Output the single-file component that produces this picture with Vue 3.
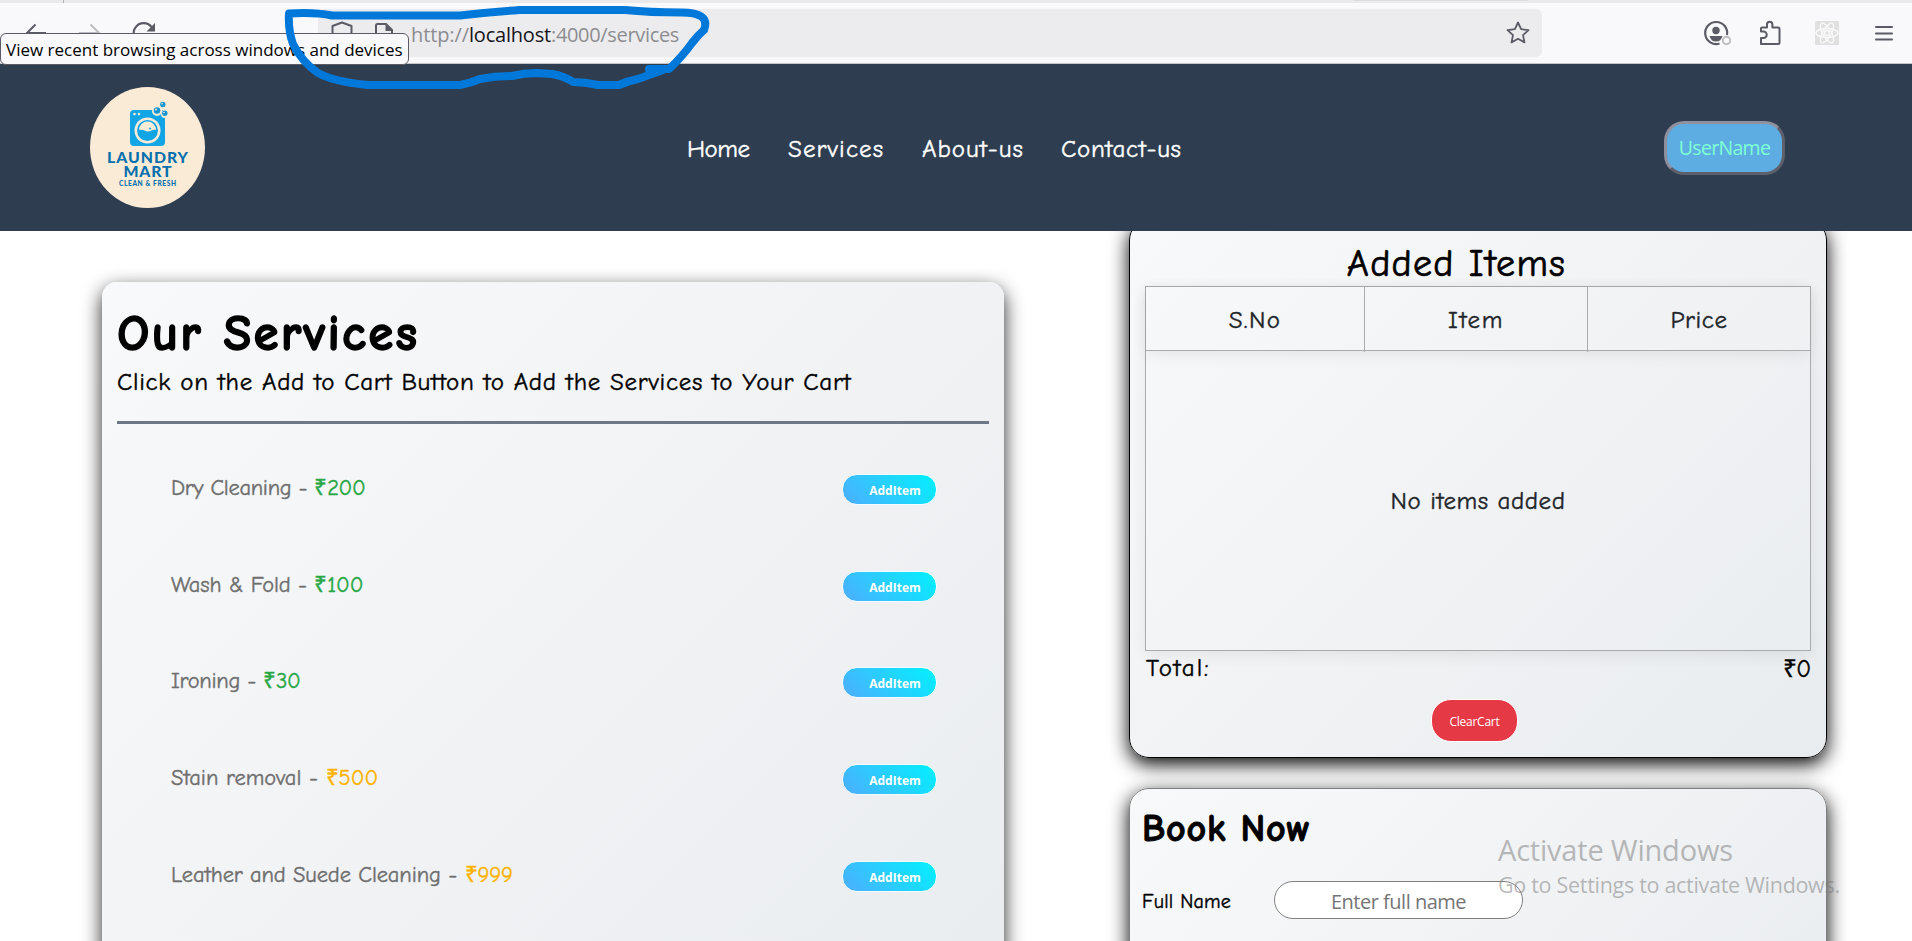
<script setup>
const links = [
  { label: 'Home', cls: 'home' },
  { label: 'Services', cls: 'services' },
  { label: 'About-us', cls: 'about' },
  { label: 'Contact-us', cls: 'contact' }
]
const services = [
  { name: 'Dry Cleaning', price: 200, tone: 'green', cls: 'dry' },
  { name: 'Wash & Fold', price: 100, tone: 'green', cls: 'wash' },
  { name: 'Ironing', price: 30, tone: 'green', cls: 'iron' },
  { name: 'Stain removal', price: 500, tone: 'amber', cls: 'stain' },
  { name: 'Leather and Suede Cleaning', price: 999, tone: 'amber', cls: 'leather' }
]
</script>

<template>
  <div class="screen">
    <div class="chrome">
      <div class="tabstrip"><span class="tabedge"></span><span class="tabshade"></span></div>
      <div class="toolbar">
        <div class="history">
          <svg width="170" height="54" viewBox="0 0 170 54">
            <path d="M46 24H27M35.500 15.500 27 24l8.500 8.500" fill="none" stroke="#5b5b66" stroke-width="2" />
            <path d="M79 24h20M90.500 15.500 99 24l-8.500 8.500" fill="none" stroke="#bcbcc2" stroke-width="2" />
            <path d="M151.500 18a10 10 0 1 0 2 8" fill="none" stroke="#5b5b66" stroke-width="2.200" />
            <path d="M155 14v8.500h-8.500z" fill="#5b5b66" />
          </svg>
        </div>
        <div class="urlbar">
          <svg class="site" width="93" height="48" viewBox="0 0 93 48">
            <path d="M24 13.500 33.500 17v6c0 6-4 10-9.500 12-5.500-2-9.500-6-9.500-12v-6z" fill="none" stroke="#5b5b66" stroke-width="2" stroke-linejoin="round" />
            <path d="M58 33V16.500q0-1.500 1.500-1.500H68l6 6v12z" fill="none" stroke="#5b5b66" stroke-width="2" />
            <path d="M67.500 14v8H75z" fill="#5b5b66" />
          </svg>
          <span class="url"><span class="proto">http://</span><b>localhost</b><span class="path">:4000/services</span></span>
          <svg class="star" width="24" height="24" viewBox="0 0 24 24">
            <path d="M12 1.500l3.100 6.700 7.400.9-5.500 5 1.500 7.300L12 17.800l-6.500 3.600L7 14.100l-5.500-5 7.400-.9z" fill="none" stroke="#5b5b66" stroke-width="1.800" stroke-linejoin="round" />
          </svg>
        </div>
        <div class="tools">
          <svg width="28" height="28" viewBox="0 0 28 28">
            <path d="M16.500 24.500A11 11 0 1 1 24 16" fill="none" stroke="#5b5b66" stroke-width="2.200" />
            <circle cx="13" cy="11.500" r="3.700" fill="#5b5b66" />
            <path d="M6.500 17h13q-1.500 5.500-6.500 5.500T6.500 17z" fill="#5b5b66" />
            <circle cx="23.500" cy="21.500" r="3.700" fill="#f9f9fb" stroke="#bdbdc3" stroke-width="2" />
          </svg>
          <svg width="24" height="28" viewBox="0 0 24 28">
            <path d="M3 25V19h2.500a3 3 0 0 0 0-6.500H3V9.500q0-1 1-1h5V5.500a2.700 2.700 0 0 1 5.400 0v3H20q1.500 0 1.500 1.500v13.500q0 1.500-1.500 1.500z" fill="none" stroke="#5b5b66" stroke-width="2" stroke-linejoin="round" />
          </svg>
          <svg width="24" height="24" viewBox="0 0 24 24">
            <rect width="24" height="24" rx="1.500" fill="#e0e0e0" />
            <g fill="none" stroke="#fafafa" stroke-width="1.300">
              <ellipse cx="12" cy="12" rx="11" ry="4.300" />
              <ellipse cx="12" cy="12" rx="11" ry="4.300" transform="rotate(60 12 12)" />
              <ellipse cx="12" cy="12" rx="11" ry="4.300" transform="rotate(120 12 12)" />
              <circle cx="12" cy="12" r="2.500" fill="#e0e0e0" />
            </g>
          </svg>
          <svg width="18" height="16" viewBox="0 0 18 16">
            <path d="M1 2h16M1 8.500h16M1 14.500h16" stroke="#5b5b66" stroke-width="2" stroke-linecap="round" />
          </svg>
        </div>
      </div>
    </div>

    <header class="navbar">
      <svg class="logo" width="116" height="122" viewBox="0 0 116 122">
        <ellipse cx="57.500" cy="60.500" rx="57.500" ry="60.500" fill="#faebd7" />
        <rect x="40" y="23" width="35" height="36" rx="4" fill="#12a5e6" />
        <circle cx="67" cy="24" r="5" fill="#faebd7" />
        <circle cx="75" cy="27" r="4" fill="#faebd7" />
        <g fill="#faebd7">
          <circle cx="44.500" cy="27" r="1.300" /><circle cx="49" cy="27" r="1.300" />
          <circle cx="57.500" cy="43.500" r="13" />
        </g>
        <circle cx="57.500" cy="43.500" r="10.500" fill="#12a5e6" />
        <path d="M49 43a8.500 8.500 0 0 1 17 0c-3-1-5 1.500-8 1.500S53 42 49 43z" fill="#faebd7" />
        <circle cx="60" cy="41.500" r="1" fill="#12a5e6" />
        <g fill="#1695d0">
          <circle cx="67" cy="23.500" r="3.300" /><circle cx="72.800" cy="17.500" r="2.700" /><circle cx="74.800" cy="26.300" r="2.700" />
        </g>
        <g fill="#faebd7">
          <circle cx="66" cy="22.500" r="1" /><circle cx="72" cy="16.700" r=".8" /><circle cx="74" cy="25.500" r=".8" />
        </g>
        <g class="brand">
          <text x="17" y="75.500" font-size="15.800" textLength="81">LAUNDRY</text>
          <text x="33.500" y="90" font-size="15.800" textLength="48">MART</text>
          <text x="29" y="98.800" font-size="6.600" textLength="57">CLEAN &amp; FRESH</text>
        </g>
      </svg>
      <nav>
        <a v-for="l in links" :key="l.label" :class="l.cls">{{ l.label }}</a>
      </nav>
      <button class="user">UserName</button>
    </header>

    <main>
      <section class="card catalog">
        <h1>Our Services</h1>
        <p class="hint">Click on the Add to Cart Button to Add the Services to Your Cart</p>
        <hr>
        <div v-for="s in services" :key="s.name" class="service">
          <span class="name" :class="s.cls">{{ s.name }} - <span :class="s.tone">₹{{ s.price }}</span></span>
          <button class="add">AddItem</button>
        </div>
      </section>

      <div class="side">
        <section class="card cart">
          <h2>Added Items</h2>
          <div class="table">
            <div class="head"><span class="sno">S.No</span><span class="item">Item</span><span class="price">Price</span></div>
            <div class="empty">No items added</div>
          </div>
          <div class="total"><span>Total:</span><span class="sum">₹0</span></div>
          <button class="clear">ClearCart</button>
        </section>
        <section class="card book">
          <h2>Book Now</h2>
          <div class="field">
            <label>Full Name</label>
            <input type="text" placeholder="Enter full name">
          </div>
        </section>
      </div>
    </main>

    <div class="tooltip">View recent browsing across windows and devices</div>
    <svg class="scribble" width="720" height="95" viewBox="0 0 720 95">
      <path d="M332 15.500Q315 12 289 13.500Q288 30 293 44Q302 62 318 73Q335 82 368 85L460 85Q471 83 480 79Q495 76 512 76Q524 73 536 73L552 74Q564 76 573 82Q585 82 598 85L619 85Q628 81 638 79Q652 74 663 70L649 69L669 69Q682 57 692 43Q698 35 704 30Q711 12 680 12.500Q650 12.500 625 10L520 10Q490 12 460 15.500Z" fill="none" stroke="#0078d9" stroke-width="8" stroke-linejoin="round" stroke-linecap="round" />
    </svg>
    <div class="watermark">
      <div class="line1">Activate Windows</div>
      <div class="line2">Go to Settings to activate Windows.</div>
    </div>
  </div>
</template>

<style>
html, body { margin: 0; overflow: hidden; background: #fff; }
</style>

<style scoped>
* { box-sizing: border-box; }
h1, h2, p { margin: 0; font-weight: 400; }
button { font-family: "Open Sans", "Noto Sans", sans-serif; }
.screen {
  position: relative; width: 1912px; height: 941px; overflow: hidden;
  display: flex; flex-direction: column; background: #fff; color: #000;
  font-family: "Comic Sans MS", "Comic Neue", "Open Sans", sans-serif;
}
.chrome { height: 64px; flex: none; background: #f9f9fb; border-bottom: 1px solid #c4c4c8; }
.tabstrip { height: 3px; background: #eaeaed; display: flex; justify-content: space-between; }
.tabedge { width: 64px; border-right: 1px solid #b0b0b5; }
.tabshade { width: 175px; margin-right: 384px; height: 1px; background: #dcdce0; }
.toolbar { height: 60px; display: flex; align-items: flex-start; }
.history { width: 318px; padding-top: 6px; }
.urlbar { width: 1224px; height: 48px; margin-top: 6px; border-radius: 6px; background: #ececee; display: flex; align-items: center; }
.site { flex: none; }
.url { flex: 1; font: 20px/48px "Open Sans", sans-serif; color: #8c8c90; letter-spacing: -.1px; margin-top: 3px; }
.url b { font-weight: 400; color: #15141a; letter-spacing: -.2px; }
.path { letter-spacing: -.33px; }
.star { margin-right: 12px; }
.tools { flex: 1; height: 60px; display: flex; align-items: center; padding-left: 161px; }
.tools svg { flex: none; }
.tools svg:nth-child(2) { margin-left: 27px; }
.tools svg:nth-child(3) { margin-left: 33px; }
.tools svg:nth-child(4) { margin-left: 36px; }

.navbar { height: 167px; flex: none; background: #2e3e50; display: flex; align-items: center; padding: 0 127px 0 90px; position: relative; z-index: 2; }
.logo { margin-top: 1px; }
.brand { font-family: Lato, "Open Sans", sans-serif; font-weight: 900; fill: #0670ad; }
nav { display: flex; margin-left: 481px; font-size: 25px; line-height: 34px; color: #fff; white-space: nowrap; padding-top: 2px; -webkit-text-stroke: .4px; }
nav a { flex: none; }
.home { width: 101px; letter-spacing: -.5px; }
.services { width: 134px; letter-spacing: 1.1px; }
.about { width: 139px; letter-spacing: .96px; }
.contact { width: 125px; letter-spacing: .65px; }
.user { margin-left: auto; width: 121px; height: 54px; border: 3px solid; border-color: #8f8f9d #5f5f6b #5f5f6b #8f8f9d; border-radius: 20px; background: #5dade2; color: #7fffd4; font-size: 19.500px; letter-spacing: -.7px; padding: 0 0 1px; }

main { display: flex; align-items: flex-start; padding-left: 102px; }
.card { box-shadow: 0 6px 19px #000; background: linear-gradient(135deg, #f8f9fa, #e9ecef); -webkit-text-stroke: .4px; }
.card button, .card input { -webkit-text-stroke: 0; }
.catalog { width: 902px; height: 760px; margin-top: 51px; border-radius: 15px; padding: 17px 15px 15px; box-shadow: 0 7px 19px rgba(0, 0, 0, .85); }
.catalog h1 { font-size: 51px; font-weight: 700; line-height: 70px; letter-spacing: 2.200px; -webkit-text-stroke: 1.300px; }
.hint { font-size: 25px; line-height: 28px; letter-spacing: .7px; white-space: nowrap; margin-top: -1px; }
hr { margin: 25px 0 14px; border: 0; height: 3px; background: #6c7885; }
.service { height: 96.700px; display: flex; align-items: center; justify-content: space-between; padding: 0 52px 0 54px; }
.name { font-size: 22.500px; line-height: 30px; color: #6e6e6e; white-space: pre; letter-spacing: -.3px; padding-top: 3px; }
.dry { letter-spacing: -.32px; }
.wash { letter-spacing: -.12px; }
.stain { letter-spacing: 0; }
.leather { letter-spacing: -.12px; }
.green { color: #28a745; }
.amber { color: #ffb300; }
.add { width: 95px; height: 31px; margin-top: 6px; padding: 2px 0 0 11px; border: 1px solid #f4fbff; border-radius: 15px; background: linear-gradient(45deg, #4facfe, #00f2fe) border-box; color: #fff; font-size: 12px; font-weight: 700; }

.side { margin-left: 125px; margin-top: -11px; width: 698px; }
.cart, .book { width: 698px; border-radius: 20px; }
.cart { height: 538px; border: 1px solid #000; padding: 18px 15px 14px; display: flex; flex-direction: column; }
.cart h2 { font-size: 38px; line-height: 49px; letter-spacing: 1.300px; text-align: center; padding-right: 43px; margin-bottom: -2px; position: relative; top: 1px; -webkit-text-stroke: .7px; }
.table { height: 365px; flex: none; border: 1px solid #a9abad; box-shadow: 0 4px 15px rgba(0, 0, 0, .07); font-size: 25px; color: #212529; display: flex; flex-direction: column; }
.head { height: 64px; display: grid; grid-template-columns: 218px 223px 1fr; border-bottom: 1px solid #a9abad; box-shadow: 0 4px 15px rgba(0, 0, 0, .07); text-align: center; line-height: 65px; }
.head span + span { border-left: 1px solid #a9abad; }
.sno { letter-spacing: 1.300px; }
.item { letter-spacing: 1.600px; }
.price { letter-spacing: .56px; }
.empty { flex: 1; display: flex; align-items: center; justify-content: center; letter-spacing: .55px; }
.total { display: flex; justify-content: space-between; height: 33px; line-height: 34px; font-size: 25px; letter-spacing: 1.900px; padding-left: 1px; }
.sum { font-size: 24.500px; letter-spacing: -.3px; line-height: 36px; }
.clear { flex: none; width: 87px; height: 43px; margin: 15px 0 0 286px; border: 1px solid #fff; border-radius: 20px; background: #e63946; color: #fff; font-size: 12px; letter-spacing: -.25px; padding: 2px 0 0; }
.book { height: 300px; margin-top: 30px; border: 1px solid #808080; padding: 15px 12px; }
.book h2 { font-size: 38px; font-weight: 700; line-height: 50px; letter-spacing: .8px; -webkit-text-stroke: .9px; }
.field { display: flex; align-items: center; height: 38px; margin-top: 27px; }
label { width: 132px; font-size: 20px; letter-spacing: .2px; color: #000; padding-top: 2px; }
input { width: 249px; height: 38px; border: 1px solid #808080; border-radius: 20px; background: #fff; padding: 2px 0 0; text-align: center; font: 20px "Open Sans", sans-serif; letter-spacing: -.5px; }
input::placeholder { color: #757575; opacity: 1; }

.tooltip { position: absolute; z-index: 3; left: 0; top: 33px; width: 409px; height: 32px; padding-left: 5px; border: 1px solid #5b5b66; border-radius: 6px; background: #f9f9fb; font: 17px/32px "Open Sans", sans-serif; white-space: nowrap; }
.scribble { position: absolute; z-index: 4; left: 0; top: 0; }
.watermark { position: absolute; z-index: 5; left: 1498px; top: 831px; font-family: "Open Sans", sans-serif; color: rgba(120, 120, 120, .5); white-space: nowrap; }
.line1 { font-size: 29px; line-height: 38px; letter-spacing: -.2px; }
.line2 { font-size: 21.500px; line-height: 32px; letter-spacing: -.3px; }
</style>
